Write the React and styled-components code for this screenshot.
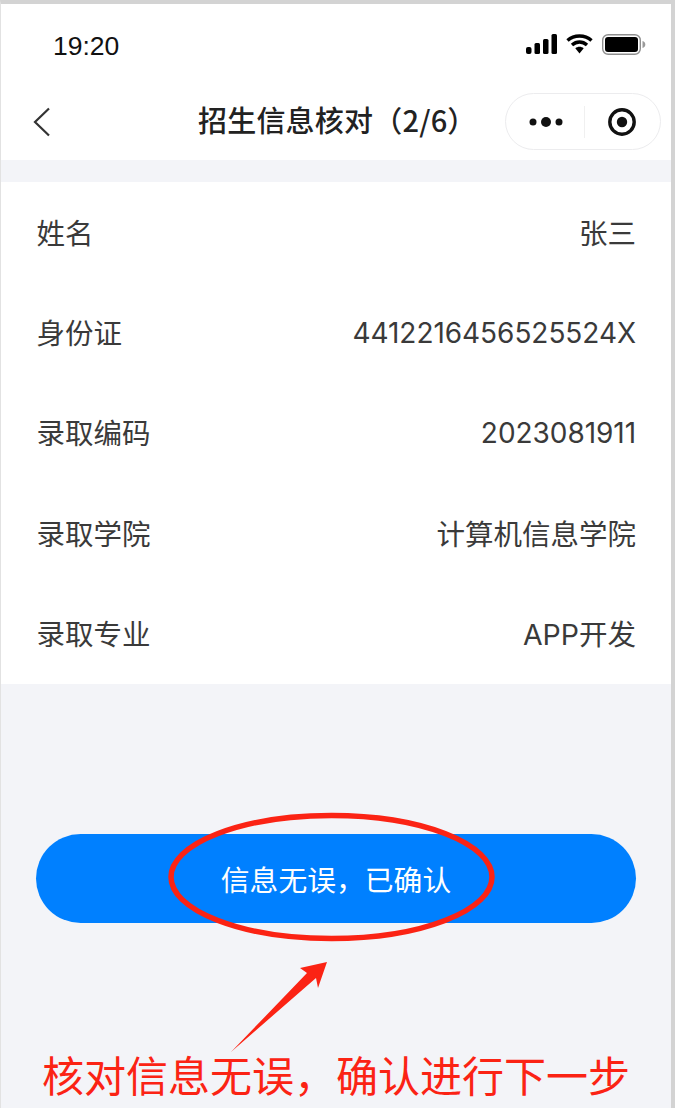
import React from 'react';
import styled, { createGlobalStyle } from 'styled-components';

const rows = [
  { label: '姓名', value: '张三' },
  { label: '身份证', value: '4412216456525524X', numeric: true },
  { label: '录取编码', value: '2023081911', numeric: true },
  { label: '录取学院', value: '计算机信息学院' },
  { label: '录取专业', value: 'APP开发' },
];

function App() {
  return (
    <>
      <GlobalStyle />
      <Frame>
        <StatusBar>
          <Time>19:20</Time>
          <StatusIcons>
            <svg width="31" height="20" viewBox="0 0 31 20" fill="#000">
              <rect x="0" y="13" width="5.5" height="7" rx="2" />
              <rect x="8.5" y="9" width="5.5" height="11" rx="1.5" />
              <rect x="17" y="5" width="5.5" height="15" rx="1.5" />
              <rect x="25.5" y="0" width="5.5" height="20" rx="1.5" />
            </svg>
            <svg width="27" height="20" viewBox="0 0 27 20">
              <path d="M1.5 6.5C8 .5 19 .5 25.5 6.5M6 11c4.500-4 10.500-4 15 0" fill="none" stroke="#000" strokeWidth="3.400" />
              <path d="M9.300 14.300c2.500-2 5.900-2 8.400 0L13.500 19.500Z" fill="#000" />
            </svg>
            <svg width="44" height="21" viewBox="0 0 44 21">
              <rect x="0.700" y="0.700" width="37.600" height="19.600" rx="5.500" fill="none" stroke="#8e8e8e" strokeWidth="1.400" />
              <rect x="3" y="3" width="33" height="15" rx="3" fill="#000" />
              <path d="M40.500 7c1.800.6 2.800 1.800 2.800 3.500s-1 2.900-2.800 3.500Z" fill="#9a9a9a" />
            </svg>
          </StatusIcons>
        </StatusBar>
        <NavBar>
          <BackIcon width="18" height="30" viewBox="0 0 18 30">
            <path d="M16 1.500 2 15l14 13.500" fill="none" stroke="#333" strokeWidth="2.200" />
          </BackIcon>
          <Title>招生信息核对（2/6）</Title>
          <Capsule>
            <CapsulePart>
              <svg width="34" height="14" viewBox="0 0 34 14" fill="#111">
                <circle cx="4" cy="7" r="3.500" />
                <circle cx="17" cy="7" r="5" />
                <circle cx="30" cy="7" r="3.500" />
              </svg>
            </CapsulePart>
            <CapsuleDivider />
            <CapsulePart>
              <svg width="30" height="30" viewBox="0 0 30 30">
                <circle cx="15" cy="15" r="12.200" fill="none" stroke="#111" strokeWidth="3.400" />
                <circle cx="15" cy="15" r="5.200" fill="#111" />
              </svg>
            </CapsulePart>
          </Capsule>
        </NavBar>
        <InfoCard>
          {rows.map((row) => (
            <InfoRow key={row.label}>
              <span>{row.label}</span>
              <Value $numeric={row.numeric}>{row.value}</Value>
            </InfoRow>
          ))}
        </InfoCard>
        <ConfirmButton>信息无误，已确认</ConfirmButton>
        <Ellipse width="327" height="132" viewBox="0 0 327 132">
          <ellipse cx="163.500" cy="66" rx="160.500" ry="61.500" fill="none" stroke="#fb2314" strokeWidth="5.500" />
        </Ellipse>
        <Arrow width="100" height="92" viewBox="0 0 100 92">
          <path d="M97 1 88 27 86 17 1 91 77 12 70 7Z" fill="#fb2314" />
        </Arrow>
        <Note>核对信息无误，确认进行下一步</Note>
      </Frame>
    </>
  );
}

const GlobalStyle = createGlobalStyle`
  html, body {
    margin: 0;
    padding: 0;
    background: #f3f4f8;
  }
  * {
    box-sizing: border-box;
  }
`;

const Frame = styled.div`
  position: relative;
  width: 675px;
  height: 1108px;
  overflow: hidden;
  background: #f3f4f8;
  border-top: 4px solid #d3d3d3;
  border-right: 4px solid #d3d3d3;
  border-left: 1px solid #e2e2e2;
  font-family: "Inter", "Noto Sans CJK SC", sans-serif;
  color: #333;
`;

const StatusBar = styled.div`
  height: 80px;
  display: flex;
  align-items: flex-start;
  justify-content: space-between;
  padding: 28px 25px 0 52px;
  background: #fff;
`;

const Time = styled.div`
  font-family: "Liberation Sans", Arial, sans-serif;
  font-size: 26.500px;
  line-height: 28px;
  color: #111;
`;

const StatusIcons = styled.div`
  display: flex;
  align-items: flex-start;
  gap: 9px;
  margin-top: 2px;
`;

const NavBar = styled.div`
  position: relative;
  height: 76px;
  display: flex;
  align-items: center;
  justify-content: space-between;
  padding: 0 10px 1px 32px;
  background: #fff;
`;

const BackIcon = styled.svg`
  display: block;
  margin-top: 1px;
`;

const Title = styled.div`
  position: absolute;
  left: 197px;
  top: 17px;
  font-family: "Noto Sans CJK SC", sans-serif;
  font-size: 29px;
  letter-spacing: 0.200px;
  line-height: 36px;
  font-weight: 500;
  color: #222;
  white-space: nowrap;
`;

const Capsule = styled.div`
  width: 156px;
  height: 57px;
  display: flex;
  align-items: center;
  padding-left: 2px;
  background: #fff;
  border: 1px solid #ececee;
  border-radius: 29px;
`;

const CapsulePart = styled.div`
  flex: 1;
  height: 100%;
  display: flex;
  align-items: center;
  justify-content: center;
  svg {
    display: block;
  }
`;

const CapsuleDivider = styled.div`
  width: 1px;
  height: 32px;
  background: #f0f0f0;
`;

const InfoCard = styled.div`
  margin-top: 22px;
  background: #fff;
`;

const InfoRow = styled.div`
  height: 100.400px;
  display: flex;
  align-items: center;
  justify-content: space-between;
  padding: 0 35px 2px 35.500px;
  font-size: 28.500px;
  color: #3a3a3a;
`;

const Value = styled.span`
  font-size: ${(props) => (props.$numeric ? '28px' : 'inherit')};
  letter-spacing: ${(props) => (props.$numeric ? '-0.050px' : 'normal')};
  margin-top: ${(props) => (props.$numeric ? '2px' : '0')};
`;

const ConfirmButton = styled.div`
  width: 600px;
  height: 89px;
  margin: 150px 0 0 35px;
  display: flex;
  align-items: center;
  justify-content: center;
  background: #0080ff;
  border-radius: 45px;
  color: #fff;
  font-size: 28.800px;
`;

const Ellipse = styled.svg`
  position: absolute;
  left: 167px;
  top: 807px;
`;

const Arrow = styled.svg`
  position: absolute;
  left: 229px;
  top: 957px;
`;

const Note = styled.div`
  position: absolute;
  left: 41px;
  top: 1044px;
  font-size: 42px;
  line-height: 58px;
  color: #fb2314;
  white-space: nowrap;
`;

export default App;
